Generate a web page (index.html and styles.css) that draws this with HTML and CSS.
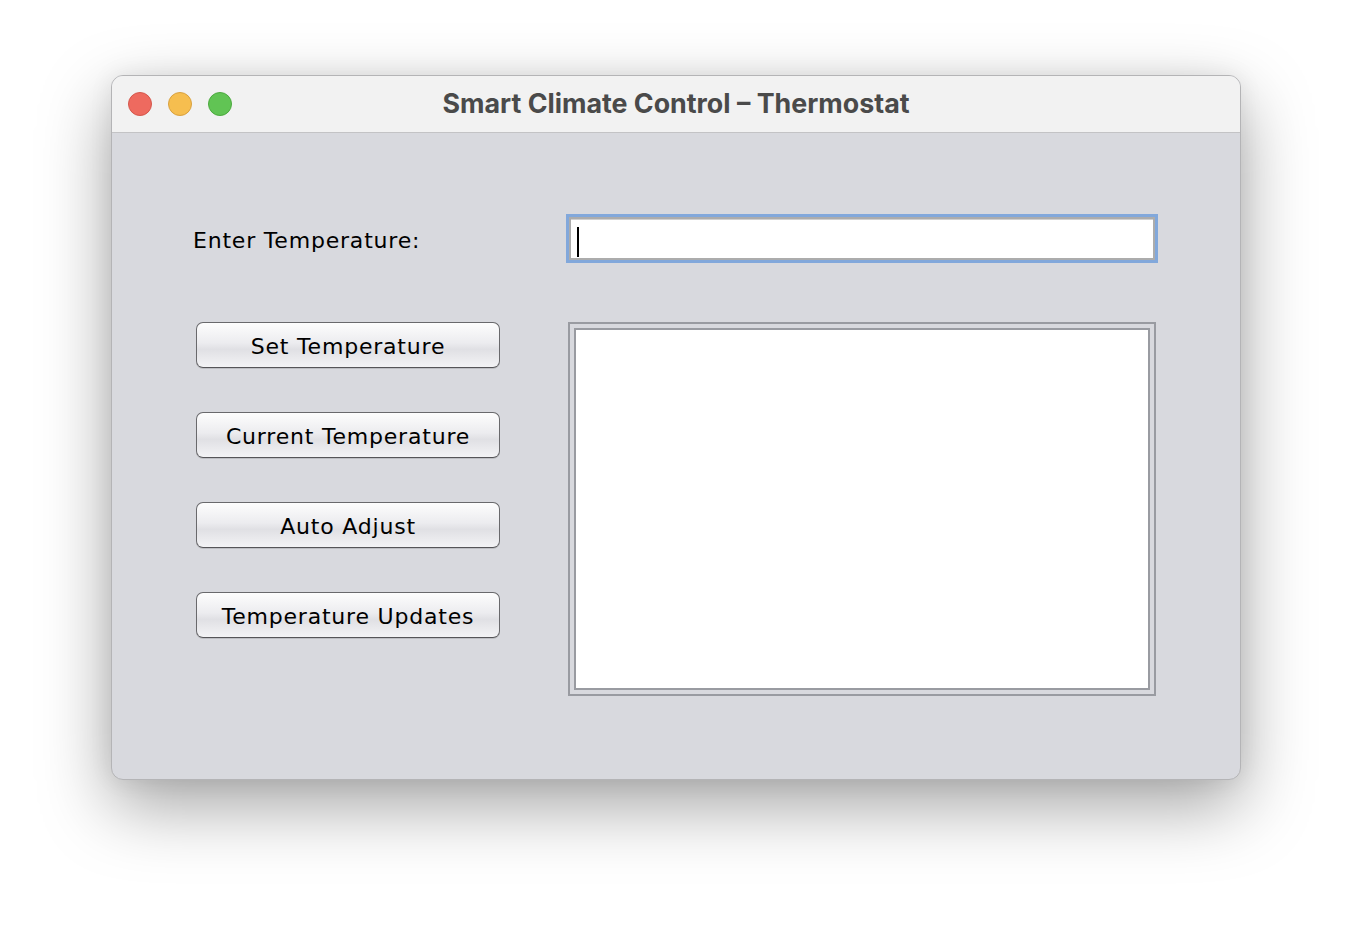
FILE: index.html
```html
<!DOCTYPE html>
<html>
<head>
<meta charset="utf-8">
<link rel="stylesheet" href="styles.css">
</head>
<body>
<div class="window">
  <div class="titlebar">
    <div class="lights">
      <span class="light red"></span>
      <span class="light yellow"></span>
      <span class="light green"></span>
    </div>
    <div class="title">Smart Climate Control – Thermostat</div>
  </div>
  <div class="content">
    <div class="row-input">
      <div class="label">Enter Temperature:</div>
      <div class="field"><span class="caret"></span></div>
    </div>
    <div class="row-main">
      <div class="buttons">
        <div class="btn">Set Temperature</div>
        <div class="btn">Current Temperature</div>
        <div class="btn">Auto Adjust</div>
        <div class="btn">Temperature Updates</div>
      </div>
      <div class="area-outer"><div class="area-inner"></div></div>
    </div>
  </div>
</div>
</body>
</html>
```

FILE: styles.css
```css
html, body {
  margin: 0;
  padding: 0;
  background: #ffffff;
}
body {
  width: 1352px;
  height: 928px;
  overflow: hidden;
  padding: 75px 0 0 111px;
  box-sizing: border-box;
}
.window {
  width: 1130px;
  height: 705px;
  border: 1px solid #b4b4b6;
  border-radius: 12px;
  box-sizing: border-box;
  background: #d8d9de;
  overflow: hidden;
  box-shadow: 0 26px 70px rgba(0,0,0,0.36), 0 0 24px rgba(0,0,0,0.07);
  display: flex;
  flex-direction: column;
}
.titlebar {
  position: relative;
  height: 56px;
  flex: none;
  background: #f2f2f2;
  border-bottom: 1px solid #c3c3c5;
  display: flex;
  align-items: center;
  justify-content: center;
}
.lights {
  position: absolute;
  left: 16px;
  top: 16px;
  display: flex;
  gap: 16px;
}
.light {
  width: 24px;
  height: 24px;
  border-radius: 50%;
  box-sizing: border-box;
}
.red { background: #ee6a5f; border: 1px solid #d5574c; }
.yellow { background: #f6be4f; border: 1px solid #d9a13f; }
.green { background: #61c454; border: 1px solid #4caa3f; }
.title {
  font-family: Inter, "Liberation Sans", sans-serif;
  font-weight: 700;
  font-size: 26.8px;
  color: #4a4a4a;
  margin-top: -2px;
}
.content {
  padding-top: 81px;
  font-family: "DejaVu Sans", "Liberation Sans", sans-serif;
  font-size: 22px;
  letter-spacing: 0.8px;
  color: #000;
}
.row-input {
  display: flex;
  align-items: center;
  height: 49px;
}
.label {
  margin-left: 81px;
  margin-top: 4px;
  width: 373px;
  flex: none;
}
.field {
  width: 592px;
  height: 49px;
  flex: none;
  box-sizing: border-box;
  border: 3px solid #82a8db;
  background: #fff;
  box-shadow: inset 0 0 0 2px #acacac, inset 0 3px 0 #d0d0d0;
  padding: 10px 0 0 8px;
}
.caret {
  display: block;
  width: 2px;
  height: 30px;
  background: #000;
}
.row-main {
  display: flex;
  margin-top: 59px;
}
.buttons {
  margin-left: 84px;
  width: 304px;
  display: flex;
  flex-direction: column;
  gap: 44px;
  flex: none;
}
.btn {
  height: 46px;
  box-sizing: border-box;
  border: 1.5px solid #69696c;
  border-bottom-color: #555558;
  border-radius: 7px;
  background: linear-gradient(#fdfdfd 0%, #ececef 45%, #e0e0e4 60%, #f3f3f5 100%);
  box-shadow: 0 1px 0 rgba(0,0,0,0.12);
  display: flex;
  align-items: center;
  justify-content: center;
  color: #000;
  padding-top: 2px;
}
.area-outer {
  margin-left: 68px;
  width: 588px;
  height: 374px;
  box-sizing: border-box;
  border: 2px solid #999ba1;
  padding: 4px;
  flex: none;
}
.area-inner {
  width: 100%;
  height: 100%;
  box-sizing: border-box;
  border: 2px solid #999ba1;
  background: #fff;
}
```
